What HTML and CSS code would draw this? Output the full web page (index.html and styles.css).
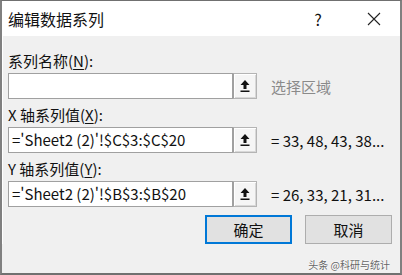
FILE: index.html
```html
<!DOCTYPE html>
<html lang="zh-CN">
<head>
    <meta charset="UTF-8">
    <title>编辑数据系列</title>
    <link rel="stylesheet" href="styles.css">
</head>
<body>

<div class="dialog">
    <div class="title-bar">
        <span class="title">编辑数据系列</span>
        <span class="help">?</span>
        <span class="close">
            <svg width="14" height="14" viewBox="0 0 14 14"><path d="M1 1 L13 13 M13 1 L1 13" stroke="#222" stroke-width="1.1" fill="none"/></svg>
        </span>
    </div>

    <div class="body">
        <div class="field">
            <div class="label">系列名称(<u>N</u>):</div>
            <div class="row">
                <div class="input"></div>
                <div class="pick"><svg width="10" height="12" viewBox="0 0 10 12"><path d="M5 0 L9.5 5 L6.5 5 L6.5 9 L3.5 9 L3.5 5 L0.5 5 Z" fill="#111"/><rect x="0.5" y="10.5" width="9" height="1.5" fill="#111"/></svg></div>
                <div class="hint">选择区域</div>
            </div>
        </div>

        <div class="field">
            <div class="label">X 轴系列值(<u>X</u>):</div>
            <div class="row">
                <div class="input">='Sheet2 (2)'!$C$3:$C$20</div>
                <div class="pick"><svg width="10" height="12" viewBox="0 0 10 12"><path d="M5 0 L9.5 5 L6.5 5 L6.5 9 L3.5 9 L3.5 5 L0.5 5 Z" fill="#111"/><rect x="0.5" y="10.5" width="9" height="1.5" fill="#111"/></svg></div>
                <div class="value">= 33, 48, 43, 38...</div>
            </div>
        </div>

        <div class="field">
            <div class="label">Y 轴系列值(<u>Y</u>):</div>
            <div class="row">
                <div class="input">='Sheet2 (2)'!$B$3:$B$20</div>
                <div class="pick"><svg width="10" height="12" viewBox="0 0 10 12"><path d="M5 0 L9.5 5 L6.5 5 L6.5 9 L3.5 9 L3.5 5 L0.5 5 Z" fill="#111"/><rect x="0.5" y="10.5" width="9" height="1.5" fill="#111"/></svg></div>
                <div class="value">= 26, 33, 21, 31...</div>
            </div>
        </div>

        <div class="buttons">
            <button class="btn btn-ok">确定</button>
            <button class="btn">取消</button>
        </div>
    </div>

    <!-- watermark over the corner -->
    <div class="watermark">头条 @科研与统计</div>
</div>

</body>
</html>
```

FILE: styles.css
```css
body {
    margin: 0;
    padding: 0;
    font-family: "Noto Sans CJK SC", "Noto Sans", sans-serif;
    color: #111;
}
.dialog {
    position: relative;
    width: 402px;
    height: 275px;
    box-sizing: border-box;
    border-top: 1px solid #707070;
    border-left: 2px solid #808080;
    border-right: 2px solid #808080;
    border-bottom: 2px solid #707070;
    background-color: #f0f0f0;
    overflow: hidden;
}
.title-bar {
    display: flex;
    align-items: center;
    height: 35px;
    background-color: #fff;
    padding-left: 6px;
}
.title {
    flex: 1;
    font-size: 16px;
}
.help {
    width: 24px;
    text-align: center;
    font-size: 16px;
    margin-right: 32px;
}
.close {
    width: 24px;
    display: flex;
    justify-content: center;
    margin-right: 14px;
}
.body {
    padding: 15px 0 0 5px;
    border-left: 1px solid #fff;
}
.field {
    margin-bottom: 4px;
}
.label {
    font-size: 15px;
    line-height: 20px;
    height: 22px;
}
.label u {
    text-decoration-thickness: 1px;
    text-underline-offset: 2px;
}
.row {
    display: flex;
    align-items: center;
    height: 26px;
    margin-bottom: 6px;
}
.input {
    width: 225px;
    height: 26px;
    box-sizing: border-box;
    border: 1px solid #a0a0a0;
    background-color: #fff;
    font-size: 15px;
    line-height: 24px;
    padding-left: 3px;
    white-space: nowrap;
}
.pick {
    width: 24px;
    height: 26px;
    box-sizing: border-box;
    border: 1px solid #b4b4b4;
    border-left: 1px solid #a0a0a0;
    box-shadow: inset 1px 1px 0 #fff, inset -1px -1px 0 #d8d8d8;
    background-color: #f5f5f5;
    display: flex;
    align-items: center;
    justify-content: center;
}
.hint {
    margin-left: 14px;
    font-size: 15px;
    color: #8a8a8a;
}
.value {
    margin-left: 14px;
    font-size: 15px;
    white-space: nowrap;
}
.buttons {
    display: flex;
    justify-content: flex-end;
    gap: 13px;
    padding-right: 8px;
    margin-top: 8px;
}
.btn {
    width: 87px;
    height: 29px;
    box-sizing: border-box;
    background-color: #e1e1e1;
    border: 1px solid #adadad;
    font-family: "Noto Sans CJK SC", sans-serif;
    font-size: 15px;
    color: #111;
    padding: 0;
}
.btn-ok {
    border: 2px solid #0078d7;
}
.watermark {
    position: absolute;
    right: 10px;
    bottom: 1px;
    font-size: 10px;
    color: #666;
    text-shadow: 0 0 2px #fff, 0 0 2px #fff;
}
```
